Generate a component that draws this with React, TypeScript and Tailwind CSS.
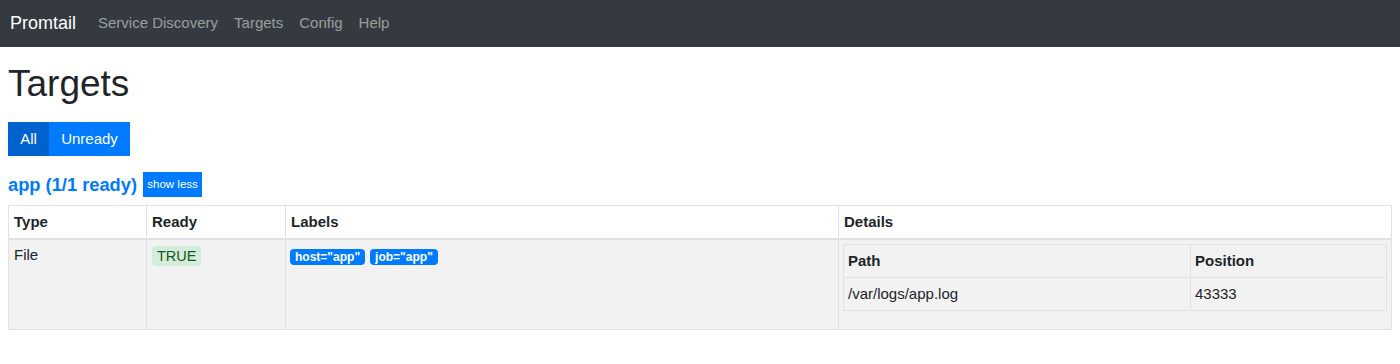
import React from "react";

const labels = [
  { key: "host", value: "app" },
  { key: "job", value: "app" },
];

export default function App() {
  return (
    <div className="min-h-screen bg-white text-[#212529] font-['Liberation_Sans',Arial,sans-serif]">
      <nav className="h-[47px] bg-[#343a40] flex items-center pl-[10px] pb-[1px]">
        <span className="text-white text-[18px] mr-[22px]">Promtail</span>
        <div className="flex items-center gap-[16px] text-[15px] text-[rgba(255,255,255,0.5)]">
          <span>Service Discovery</span>
          <span>Targets</span>
          <span>Config</span>
          <span>Help</span>
        </div>
      </nav>

      <div className="px-[8px]">
        <h1 className="text-[37px] leading-[1.2] mt-[15px] mb-[16px]">Targets</h1>

        <div className="flex text-[15px] text-white">
          <button className="h-[34px] w-[41px] bg-[#0062cc]">All</button>
          <button className="h-[34px] w-[81px] bg-[#007bff]">Unready</button>
        </div>

        <div className="flex items-center mt-[16px] mb-[8px]">
          <h2 className="text-[18.3px] font-bold text-[#007bff] leading-[22px]">app (1/1 ready)</h2>
          <button className="ml-[6px] h-[25px] w-[59px] bg-[#007bff] text-white text-[11.5px]">
            show less
          </button>
        </div>

        <table className="w-full border-collapse border border-[#dee2e6] text-[15px]">
          <thead>
            <tr className="text-left">
              <th className="w-[138px] border border-[#dee2e6] border-b-2 px-[5px] py-[6px] leading-[20px] font-bold">Type</th>
              <th className="w-[139px] border border-[#dee2e6] border-b-2 px-[5px] py-[6px] leading-[20px] font-bold">Ready</th>
              <th className="w-[553px] border border-[#dee2e6] border-b-2 px-[5px] py-[6px] leading-[20px] font-bold">Labels</th>
              <th className="border border-[#dee2e6] border-b-2 px-[5px] py-[6px] leading-[20px] font-bold">Details</th>
            </tr>
          </thead>
          <tbody>
            <tr className="bg-[#f2f2f2] align-top">
              <td className="border border-[#dee2e6] px-[5px] py-[5px] leading-[20px]">File</td>
              <td className="border border-[#dee2e6] px-[5px] py-[5px] leading-[20px]">
                <span className="inline-block mt-[1px] px-[5px] rounded-[4px] bg-[#d4edda] text-[#155724] text-[14.5px] leading-[20px]">
                  TRUE
                </span>
              </td>
              <td className="border border-[#dee2e6] px-[4px] py-[5px] leading-[20px]">
                <div className="flex gap-[5px] mt-[4px]">
                  {labels.map((l) => (
                    <span
                      key={l.key}
                      className="inline-block px-[5px] rounded-[4px] bg-[#007bff] text-white font-bold text-[12px] leading-[16px]"
                    >
                      {l.key}="{l.value}"
                    </span>
                  ))}
                </div>
              </td>
              <td className="border border-[#dee2e6] px-[4px] pt-[4px] pb-[5px]">
                <table className="w-full border-collapse border border-[#dee2e6] mb-[13px]">
                  <thead>
                    <tr className="text-left">
                      <th className="w-[347px] border border-[#dee2e6] px-[4px] py-[6px] leading-[20px] font-bold">Path</th>
                      <th className="border border-[#dee2e6] px-[4px] py-[6px] leading-[20px] font-bold">Position</th>
                    </tr>
                  </thead>
                  <tbody>
                    <tr>
                      <td className="border border-[#dee2e6] px-[4px] py-[6px] leading-[20px]">/var/logs/app.log</td>
                      <td className="border border-[#dee2e6] px-[4px] py-[6px] leading-[20px]">43333</td>
                    </tr>
                  </tbody>
                </table>
              </td>
            </tr>
          </tbody>
        </table>
      </div>
    </div>
  );
}
